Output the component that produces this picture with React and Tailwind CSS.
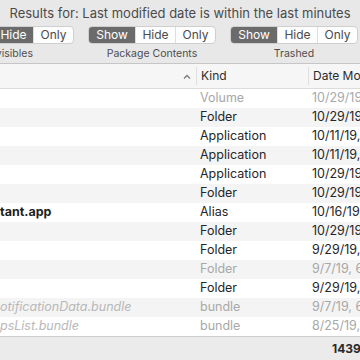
import React from "react";

const rows = [
  { name: "", kind: "Volume", date: "10/29/19, 2:14 PM", dim: true },
  { name: "", kind: "Folder", date: "10/29/19, 2:14 PM" },
  { name: "", kind: "Application", date: "10/11/19, 9:02 AM" },
  { name: "", kind: "Application", date: "10/11/19, 9:02 AM" },
  { name: "", kind: "Application", date: "10/29/19, 2:14 PM" },
  { name: "", kind: "Folder", date: "10/29/19, 2:14 PM" },
  { name: "tant.app", kind: "Alias", date: "10/16/19, 4:40 PM", bold: true },
  { name: "", kind: "Folder", date: "10/29/19, 2:14 PM" },
  { name: "", kind: "Folder", date: "9/29/19, 11:08 AM" },
  { name: "", kind: "Folder", date: "9/7/19, 6:21 PM", dim: true },
  { name: "", kind: "Folder", date: "9/29/19, 11:08 AM" },
  { name: "otificationData.bundle", kind: "bundle", date: "9/7/19, 6:21 PM", dim: true, italic: true },
  { name: "psList.bundle", kind: "bundle", date: "8/25/19, 3:47 PM", dim: true, italic: true },
];

function Segmented({ active, label }) {
  const segs = [
    { t: "Show", w: "w-[46px]" },
    { t: "Hide", w: "w-[40px]" },
    { t: "Only", w: "w-[40px]" },
  ];
  return (
    <div className="flex flex-col items-center shrink-0">
      <div className="flex h-[18px] rounded-[4px] overflow-hidden border border-[#cfcfcf] bg-[#fdfdfd]">
        {segs.map((s, i) => (
          <div
            key={s.t}
            className={
              s.w +
              " flex items-center justify-center text-[12px] leading-none " +
              (s.t === active
                ? "bg-[#6b6b6b] text-white"
                : "text-[#4a4a4a]") +
              (i > 0 ? " border-l border-[#dedede]" : "")
            }
          >
            {s.t}
          </div>
        ))}
      </div>
      <div className="mt-[3px] text-[10.5px] leading-[13px] text-[#4e4e4e] whitespace-nowrap">
        {label}
      </div>
    </div>
  );
}

export default function App() {
  return (
    <div className="w-[360px] h-[360px] overflow-hidden bg-[#e8e8e8] flex flex-col font-['Inter',sans-serif]">
      {/* toolbar */}
      <div className="h-[63px] shrink-0 flex flex-col">
        <div className="pt-[5px] h-[26px] text-center text-[13px] leading-[16px] text-[#4b4b4b] whitespace-nowrap">
          Results for: Last modified date is within the last minutes
        </div>
        <div className="flex gap-[14px] ml-[-54px]">
          <Segmented active="Hide" label="Invisibles" />
          <Segmented active="Show" label="Package Contents" />
          <Segmented active="Show" label="Trashed" />
        </div>
      </div>

      {/* header */}
      <div className="h-[26px] shrink-0 flex items-center bg-[#f6f6f6] border-t border-[#c6c6c6] border-b border-b-[#dcdcdc] text-[12px] text-[#2c2c2c]">
        <div className="w-[196px] shrink-0 h-full flex items-center justify-end pr-[5px]">
          <svg width="8" height="5" viewBox="0 0 8 5">
            <polyline points="1,4.5 4,1.5 7,4.5" fill="none" stroke="#7a7a7a" strokeWidth="1.3" />
          </svg>
        </div>
        <div className="w-[112px] shrink-0 h-[18px] border-l border-[#e0e0e0] pl-[4px] flex items-center">Kind</div>
        <div className="flex-1 min-w-0 overflow-hidden h-[18px] border-l border-[#e0e0e0] pl-[4px] flex items-center whitespace-nowrap">
          Date Modified
        </div>
      </div>

      {/* rows */}
      <div className="flex flex-col bg-white shrink-0">
        {rows.map((r, i) => (
          <div
            key={i}
            className={
              "h-[19px] shrink-0 flex items-center text-[12.5px] whitespace-nowrap " +
              (i % 2 === 1 ? "bg-[#f4f4f4]" : "bg-white")
            }
          >
            <div
              className={
                "w-[196px] shrink-0 overflow-hidden " +
                (r.bold ? "font-bold text-[#1e1e1e] " : "") +
                (r.italic ? "italic text-[#b8b8b8] " : "")
              }
            >
              {r.name}
            </div>
            <div className={"w-[112px] shrink-0 pl-[4px] " + (r.dim ? "text-[#a8a8a8]" : "text-[#262626]")}>
              {r.kind}
            </div>
            <div className={"flex-1 min-w-0 overflow-hidden pl-[4px] " + (r.dim ? "text-[#a8a8a8]" : "text-[#262626]")}>
              {r.date}
            </div>
          </div>
        ))}
      </div>

      {/* footer */}
      <div className="flex-1 bg-[#ebebeb] border-t border-[#cdcdcd] flex items-center">
        <div className="ml-[332px] text-[12px] font-bold text-[#2a2a2a] whitespace-nowrap">
          14396 items
        </div>
      </div>
    </div>
  );
}
